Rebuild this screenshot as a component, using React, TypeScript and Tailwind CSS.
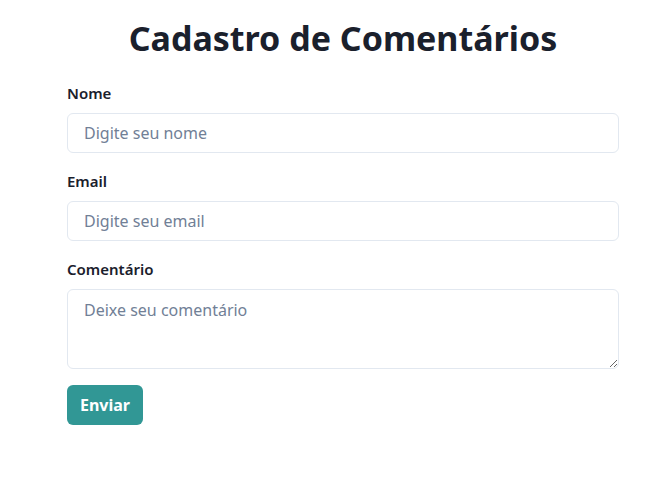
import { useState } from "react";

// Formulário de cadastro de comentários
const App = () => {
  const [nome, setNome] = useState("");
  const [email, setEmail] = useState("");
  const [comentario, setComentario] = useState("");

  return (
    <div
      className="min-h-[481px] bg-white"
      style={{ fontFamily: '"Noto Sans", "Open Sans", sans-serif' }}
    >
      <div className="ml-[67px] w-[552px] pt-[16px]">
        <h1 className="mb-[21px] text-center text-[34px] leading-[44px] font-bold text-[#1a202c]">
          Cadastro de Comentários
        </h1>

        <form className="flex flex-col" onSubmit={(e) => e.preventDefault()}>
          <label className="mb-[8px] text-[15px] leading-[24px] font-semibold text-[#1a202c]">
            Nome
          </label>
          <input
            value={nome}
            onChange={(e) => setNome(e.target.value)}
            placeholder="Digite seu nome"
            className="mb-[16px] h-[40px] rounded-md border border-[#e2e8f0] px-[16px] text-[16px] text-[#1a202c] placeholder:text-[#718096] outline-none"
          />

          <label className="mb-[8px] text-[15px] leading-[24px] font-semibold text-[#1a202c]">
            Email
          </label>
          <input
            value={email}
            onChange={(e) => setEmail(e.target.value)}
            placeholder="Digite seu email"
            className="mb-[16px] h-[40px] rounded-md border border-[#e2e8f0] px-[16px] text-[16px] text-[#1a202c] placeholder:text-[#718096] outline-none"
          />

          <label className="mb-[8px] text-[15px] leading-[24px] font-semibold text-[#1a202c]">
            Comentário
          </label>
          <textarea
            value={comentario}
            onChange={(e) => setComentario(e.target.value)}
            placeholder="Deixe seu comentário"
            className="mb-[16px] h-[80px] rounded-md border border-[#e2e8f0] px-[16px] py-[8px] text-[16px] text-[#1a202c] placeholder:text-[#718096] outline-none"
          />

          <div>
            <button
              type="submit"
              className="h-[40px] w-[76px] rounded-md bg-[#319795] text-[16px] font-bold text-white"
            >
              Enviar
            </button>
          </div>
        </form>
      </div>
    </div>
  );
};

export default App;
